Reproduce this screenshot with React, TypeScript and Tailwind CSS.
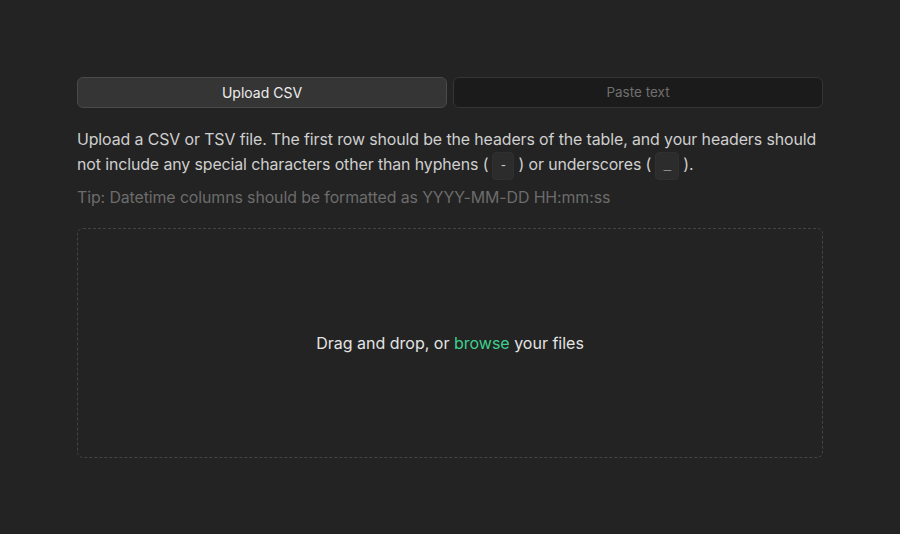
export default function App() {
  return (
    <div className="min-h-[534px] w-full bg-[#232323] font-['Inter',sans-serif]">
      <div className="mx-auto w-[746px] pt-[77px]">
        <div className="flex gap-[6px]">
          <button className="h-[31px] flex-1 rounded-md border border-[#4a4a4a] bg-[#353535] text-[14px] text-[#ededed]">
            Upload CSV
          </button>
          <button className="h-[31px] flex-1 rounded-md border border-[#353535] bg-[#1b1b1b] text-[13.5px] text-[#6f6f6f]">
            Paste text
          </button>
        </div>
        <p className="mt-[19px] whitespace-nowrap text-[15.9px] leading-[25px] tracking-[-0.1px] text-[#cfcfcf]">
          Upload a CSV or TSV file. The first row should be the headers of the table, and your headers should
          <br />
          not include any special characters other than hyphens (
          <code className="mx-[4px] -my-[4px] inline-flex h-[28px] w-[22px] items-center justify-center rounded border border-[#303030] bg-[#2c2c2c] align-middle text-[13px] text-[#cfcfcf]">-</code>
          ) or underscores (
          <code className="mx-[4px] -my-[4px] inline-flex h-[28px] w-[24px] items-center justify-center rounded border border-[#303030] bg-[#2c2c2c] align-middle text-[13px] text-[#cfcfcf]">_</code>
          ).
        </p>
        <p className="mt-[8px] text-[15.9px] leading-[25px] tracking-[-0.1px] text-[#6c6c6c]">
          Tip: Datetime columns should be formatted as YYYY-MM-DD HH:mm:ss
        </p>
        <div className="mt-[18px] flex h-[230px] items-center justify-center rounded-md border border-dashed border-[#444]">
          <p className="text-[16px] text-[#e4e4e4]">
            Drag and drop, or <span className="text-[#3ecf8e]">browse</span> your files
          </p>
        </div>
      </div>
    </div>
  );
}
